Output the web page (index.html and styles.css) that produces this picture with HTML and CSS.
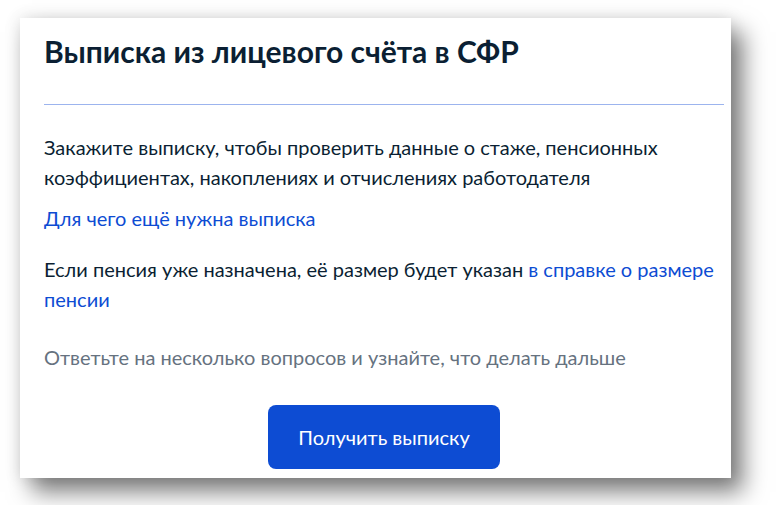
FILE: index.html
```html
<!DOCTYPE html>
<html lang="ru">
<head>
<meta charset="utf-8">
<title>Выписка из лицевого счёта в СФР</title>
<link rel="stylesheet" href="styles.css">
</head>
<body>
<div class="card">
  <h1 class="title">Выписка из лицевого счёта в СФР</h1>
  <hr class="divider">
  <p class="text">Закажите выписку, чтобы проверить данные о стаже, пенсионных коэффициентах, накоплениях и отчислениях работодателя</p>
  <p class="text link-line"><a class="link" href="#">Для чего ещё нужна выписка</a></p>
  <p class="text pension">Если пенсия уже назначена, её размер будет указан <a class="link" href="#">в справке о размере пенсии</a></p>
  <p class="text muted">Ответьте на несколько вопросов и узнайте, что делать дальше</p>
  <div class="actions">
    <button class="btn" type="button">Получить выписку</button>
  </div>
</div>
</body>
</html>
```
FILE: styles.css
```css
html, body {
  margin: 0;
  padding: 0;
  background: #ffffff;
}
body {
  font-family: Lato, "Noto Sans", sans-serif;
  color: #0b1f33;
  min-height: 505px;
  padding-top: 18px;
  box-sizing: border-box;
}
.card {
  margin: 0 0 0 20px;
  width: 711px;
  height: 460px;
  box-sizing: border-box;
  padding: 15px 7px 0 24px;
  background: #ffffff;
  overflow: hidden;
  box-shadow: 12px 14px 22px rgba(0, 0, 0, 0.5), 0 0 16px rgba(0, 0, 0, 0.12);
}
.title {
  margin: 0;
  font-size: 30px;
  line-height: 36px;
  font-weight: 700;
  color: #0b1f33;
}
.divider {
  margin: 35px 0 0;
  border: 0;
  height: 1px;
  background: #9cb4ee;
}
.text {
  margin: 0;
  font-size: 20px;
  line-height: 30px;
}
.divider + .text {
  margin-top: 27px;
}
.link-line {
  margin-top: 11px;
}
.pension {
  margin-top: 21px;
}
.muted {
  margin-top: 28px;
  color: #66727f;
}
.link {
  color: #0d4cd3;
  text-decoration: none;
}
.actions {
  display: flex;
  justify-content: center;
  margin-top: 33px;
}
.btn {
  height: 64px;
  padding: 0 30px;
  border: 0;
  border-radius: 8px;
  background: #0d4cd3;
  color: #ffffff;
  font-family: Lato, "Noto Sans", sans-serif;
  font-size: 20px;
}
```
